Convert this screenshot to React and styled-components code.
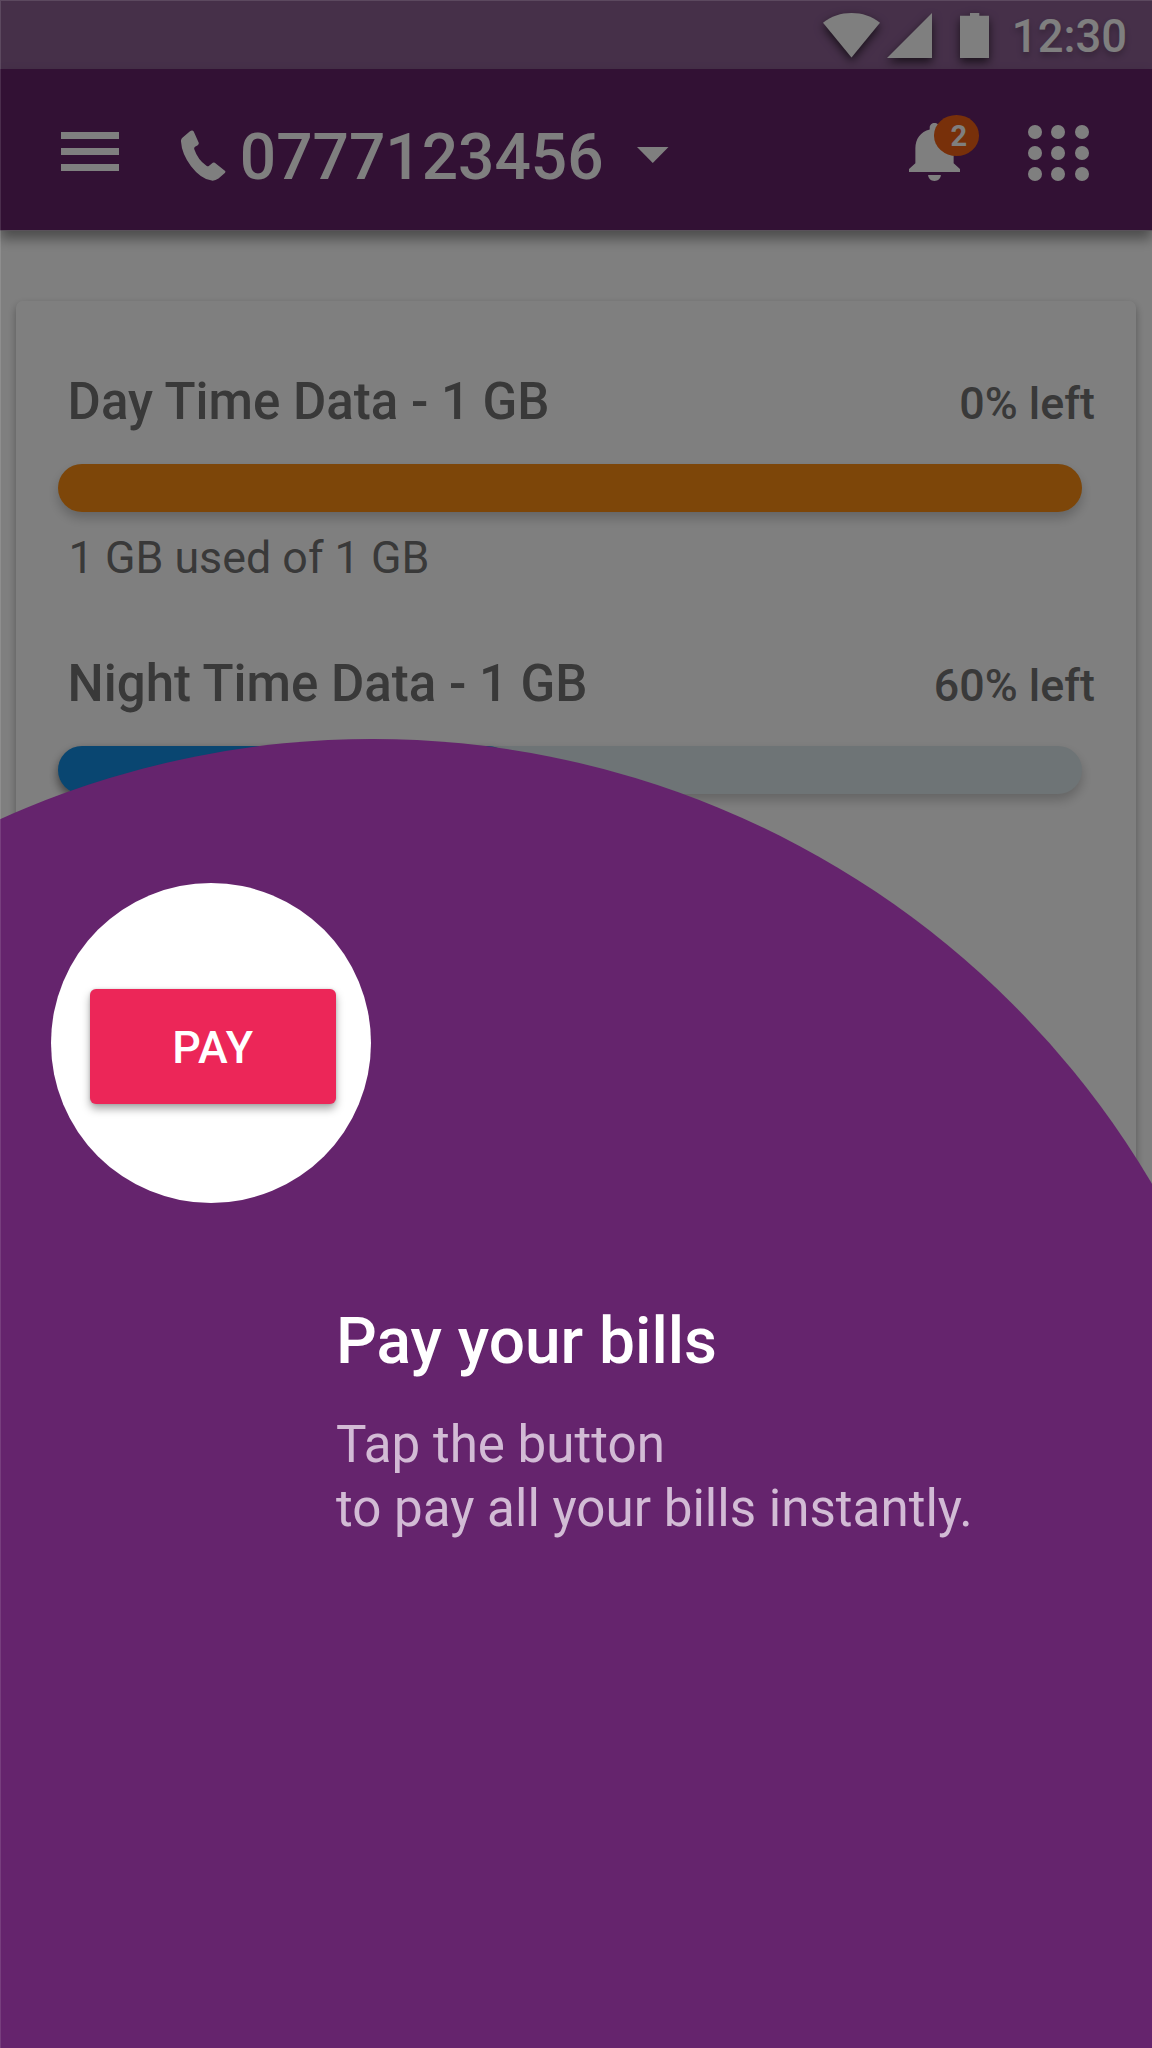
import React from "react";
import styled, { createGlobalStyle } from "styled-components";

const GlobalStyle = createGlobalStyle`
  *, *::before, *::after { box-sizing: border-box; }
  body { margin: 0; background: #fff; font-family: Roboto, "Noto Sans", sans-serif; }
  h2, h3, p { margin: 0; font-weight: inherit; }
  button { font-family: inherit; border: 0; padding: 0; background: none; color: inherit; }
  svg { display: block; flex: none; }
`;

const Screen = styled.main`
  position: relative;
  width: 1152px;
  height: 2048px;
  overflow: hidden;
  background: #fff;

  &::after {
    content: "";
    position: absolute;
    inset: 0;
    box-shadow: inset 1px 1px rgba(255, 255, 255, 0.12);
    pointer-events: none;
  }
`;

const StatusBar = styled.div`
  display: flex;
  align-items: flex-start;
  justify-content: flex-end;
  height: 69px;
  padding: 13px 25px 0 0;
  background: #8c6093;
  color: #fff;
`;

const StatusIcon = styled.svg`
  margin-right: ${(p) => p.$gap}px;
  fill: currentColor;
  overflow: visible;
  filter: drop-shadow(0 4px 5px rgba(0, 0, 0, 0.65));
`;

const Clock = styled.time`
  margin-top: -3px;
  font-size: 45.4px;
  font-weight: 500;
  line-height: 54px;
  text-shadow: 0 4px 6px rgba(0, 0, 0, 0.25);
`;

const AppBar = styled.header`
  position: relative;
  display: flex;
  align-items: center;
  height: 162px;
  padding: 4px 63.5px 0 61px;
  border-bottom: 1px solid #b3a3b5;
  background: #642268;
  color: #fff;
  box-shadow: 0 8px 12px rgba(0, 0, 0, 0.4);
`;

const MenuButton = styled.button`
  display: grid;
  gap: 9px;
  width: 58px;
  margin-right: 62px;
`;

const MenuLine = styled.span`
  height: 7px;
  background: #fff;
`;

const Account = styled.div`
  display: flex;
  align-items: center;
  margin-right: auto;
  padding-top: 7px;
`;

const AccountNumber = styled.span`
  margin: 6px 33.9px 0 14.3px;
  font-size: 64px;
  font-weight: 500;
  line-height: 76px;
`;

const Notifications = styled.button`
  position: relative;
  margin-right: 67.8px;
`;

const Badge = styled.span`
  position: absolute;
  top: -7.5px;
  left: 25.3px;
  display: flex;
  align-items: center;
  justify-content: center;
  width: 45px;
  height: 40.5px;
  padding-left: 4px;
  padding-top: 1px;
  border-radius: 50%;
  background: #f06014;
  color: #fff;
  font-size: 29px;
  font-weight: 700;
  line-height: 34px;
`;

const AppsButton = styled.button`
  display: grid;
  grid-template-columns: repeat(3, 14px);
  gap: 6.7px 9.3px;
  margin-top: 3px;
`;

const Dot = styled.span`
  height: 14px;
  border-radius: 50%;
  background: #fff;
`;

const UsageCard = styled.section`
  display: flex;
  flex-direction: column;
  gap: 70px;
  height: 960px;
  margin: 70px 16px 0;
  padding: 71px 41px 0 42px;
  border-radius: 7px;
  background: #fff;
  color: #727272;
  box-shadow: 0 4px 8px rgba(0, 0, 0, 0.32);
`;

const UsageHead = styled.div`
  display: flex;
  align-items: baseline;
  justify-content: space-between;
  height: 60px;
  margin-bottom: 32px;
  padding-left: 9.6px;
`;

const UsageTitle = styled.h3`
  font-size: 51px;
  font-weight: 500;
  line-height: 60px;
`;

const Remaining = styled.span`
  font-size: 44.8px;
  font-weight: 500;
  line-height: 52px;
`;

const Track = styled.div`
  height: 48px;
  margin-right: 13px;
  border-radius: 24px;
  background: #dce8ec;
  box-shadow: 0 6px 12px rgba(0, 0, 0, 0.22);
`;

const Fill = styled.div`
  width: ${(p) => p.$width};
  height: 100%;
  border-radius: inherit;
  background: ${(p) => p.$color};
  box-shadow: ${(p) => (p.$raised ? "0 4px 8px rgba(0, 0, 0, 0.35)" : "none")};
`;

const UsageNote = styled.p`
  margin-top: 20px;
  padding-left: 10.6px;
  font-size: 44.8px;
  line-height: 52px;
`;

const Scrim = styled.div`
  position: absolute;
  inset: 0;
  background: rgba(0, 0, 0, 0.5);
`;

const Ripple = styled.div`
  position: absolute;
  top: 739px;
  left: -533px;
  width: 1811px;
  height: 1811px;
  border-radius: 50%;
  background: #65246d;
`;

const Coach = styled.aside`
  position: absolute;
  inset: 0;
  padding: 883px 51px 0;
`;

const Spotlight = styled.div`
  display: flex;
  align-items: center;
  justify-content: center;
  width: 320px;
  height: 320px;
  padding: 7px 0 0 4px;
  border-radius: 50%;
  background: #fff;
`;

const PayButton = styled.button`
  width: 246px;
  height: 115px;
  padding-top: 1px;
  border-radius: 6px;
  background: #ec2658;
  color: #fff;
  font-size: 44.8px;
  font-weight: 500;
  letter-spacing: 0.6px;
  box-shadow: 0 5px 8px rgba(0, 0, 0, 0.34), 0 0 3px rgba(0, 0, 0, 0.15);
`;

const CoachText = styled.div`
  margin: 101px 0 0 285px;
`;

const CoachTitle = styled.h2`
  color: #fff;
  font-size: 64px;
  font-weight: 500;
  line-height: 75px;
`;

const CoachBody = styled.p`
  margin-top: 34px;
  color: #d2bbd5;
  font-size: 51.15px;
  line-height: 64px;
`;

const plans = [
  {
    title: "Day Time Data - 1 GB",
    left: "0% left",
    note: "1 GB used of 1 GB",
    width: "100%",
    color: "#fa8c12",
  },
  {
    title: "Night Time Data - 1 GB",
    left: "60% left",
    width: "44.3%",
    color: "#128ce2",
    raised: true,
  },
];

function Usage({ plan }) {
  return (
    <div>
      <UsageHead>
        <UsageTitle>{plan.title}</UsageTitle>
        <Remaining>{plan.left}</Remaining>
      </UsageHead>
      <Track>
        <Fill $width={plan.width} $color={plan.color} $raised={plan.raised} />
      </Track>
      {plan.note && <UsageNote>{plan.note}</UsageNote>}
    </div>
  );
}

export default function App() {
  return (
    <>
      <GlobalStyle />
      <Screen>
        <StatusBar>
          <StatusIcon $gap={7} width="57" height="45" viewBox="0 0 57 45">
            <path d="M28.5 44.5 0 9.7C8 3.2 18 0 28.5 0S49 3.2 57 9.7Z" />
          </StatusIcon>
          <StatusIcon $gap={28} width="45" height="45" viewBox="0 0 45 45">
            <path d="M45 0V45H0Z" />
          </StatusIcon>
          <StatusIcon $gap={23} width="29" height="45" viewBox="0 0 29 45">
            <path d="M10 0h9.3v2.7H29V45H0V2.7h10Z" />
          </StatusIcon>
          <Clock>12:30</Clock>
        </StatusBar>

        <AppBar>
          <MenuButton aria-label="Menu">
            <MenuLine />
            <MenuLine />
            <MenuLine />
          </MenuButton>
          <Account>
            <svg width="44.5" height="51" viewBox="0 0 133 152" fill="#fff">
              <path d="M26 4Q34-2 38 4L53 38Q54 42 50 45L42 50Q38 53 40 58 50 88 76 107 80 110 84 107L95 98Q98 96 101 98L132 122Q134 125 131 128L112 145Q102 152 92 151 60 147 30 108 2 70 0 34-1 27 5 22Z" />
            </svg>
            <AccountNumber>0777123456</AccountNumber>
            <svg width="31.5" height="16" viewBox="0 0 31.5 16" fill="#fff">
              <path d="M0 0h31.5L15.75 16Z" />
            </svg>
          </Account>
          <Notifications aria-label="Notifications">
            <svg width="51" height="58" viewBox="4 2.5 16 19.5" preserveAspectRatio="none" fill="#fff">
              <path d="M12 22c1.1 0 2-.9 2-2h-4c0 1.1.89 2 2 2zm6-6v-5c0-3.07-1.64-5.64-4.5-6.32V4c0-.83-.67-1.5-1.5-1.5s-1.5.67-1.5 1.5v.68C7.63 5.36 6 7.92 6 11v5l-2 2v1h16v-1l-2-2z" />
            </svg>
            <Badge>2</Badge>
          </Notifications>
          <AppsButton aria-label="Apps">
            {Array.from({ length: 9 }, (_, i) => (
              <Dot key={i} />
            ))}
          </AppsButton>
        </AppBar>

        <UsageCard>
          {plans.map((plan) => (
            <Usage key={plan.title} plan={plan} />
          ))}
        </UsageCard>

        <Scrim />
        <Ripple />
        <Coach>
          <Spotlight>
            <PayButton>PAY</PayButton>
          </Spotlight>
          <CoachText>
            <CoachTitle>Pay your bills</CoachTitle>
            <CoachBody>
              Tap the button
              <br />
              to pay all your bills instantly.
            </CoachBody>
          </CoachText>
        </Coach>
      </Screen>
    </>
  );
}
